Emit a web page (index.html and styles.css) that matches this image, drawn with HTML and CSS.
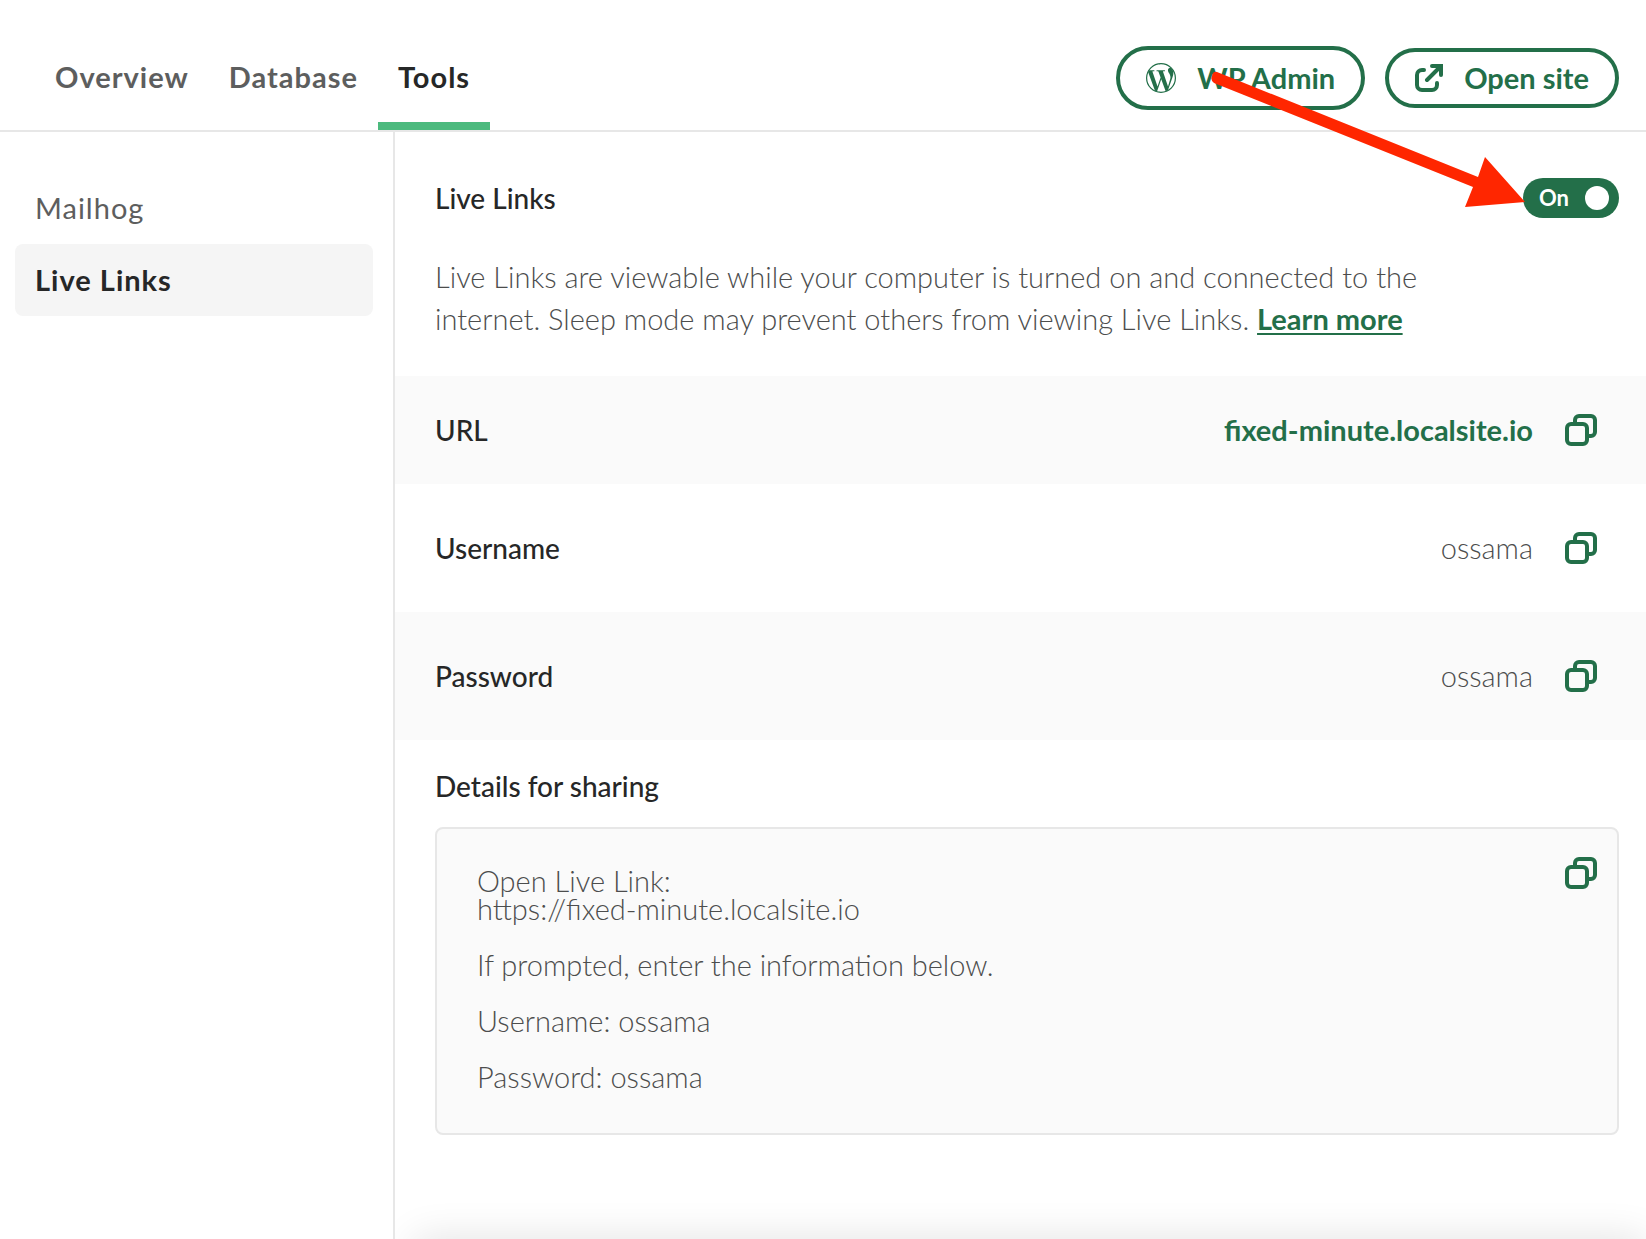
FILE: index.html
```html
<!DOCTYPE html>
<html lang="en">
<head>
<meta charset="utf-8">
<meta name="viewport" content="width=device-width, initial-scale=1">
<title>Live Links</title>
<link rel="stylesheet" href="styles.css">
</head>
<body>
<svg class="sprite" aria-hidden="true">
  <symbol id="copy" viewBox="0 0 32 32">
    <path fill="none" stroke="currentColor" stroke-width="4" d="M10 9V6a4 4 0 0 1 4-4h12a4 4 0 0 1 4 4v12a4 4 0 0 1-4 4h-3"/>
    <rect fill="none" stroke="currentColor" stroke-width="4" x="2" y="10" width="20" height="20" rx="4"/>
  </symbol>
</svg>
<header class="topbar">
  <nav class="tabs" aria-label="Site">
    <a class="tab" href="#overview">Overview</a>
    <a class="tab" href="#database">Database</a>
    <a class="tab tab-active" href="#tools" aria-current="page">Tools</a>
  </nav>
  <div class="actions">
    <button class="button button-large" type="button">
      <svg class="icon-wp" viewBox="8 8 496 496" aria-hidden="true"><circle cx="256" cy="256" r="238" fill="none" stroke="currentColor" stroke-width="20"/><path transform="translate(256 256) scale(1.09) translate(-256 -256)" fill="currentColor" fill-rule="evenodd" d="M43.3 256a212.7 212.7 0 1 0 425.4 0a212.7 212.7 0 1 0-425.4 0zM61.7 169.4l101.5 278C92.2 413 43.3 340.2 43.3 256c0-30.9 6.6-60.1 18.4-86.6zm337.9 75.9c0-26.3-9.4-44.5-17.5-58.7-10.8-17.5-20.9-32.4-20.9-49.9 0-19.6 14.8-37.8 35.7-37.8.9 0 1.8.1 2.8.2-37.9-34.7-88.3-55.9-143.7-55.9-74.3 0-139.7 38.1-177.8 95.9 5 .2 9.7.3 13.7.3 22.2 0 56.7-2.7 56.7-2.7 11.5-.7 12.8 16.2 1.4 17.5 0 0-11.5 1.3-24.3 2l77.5 230.4L249.8 247l-33.1-90.8c-11.5-.7-22.3-2-22.3-2-11.5-.7-10.1-18.2 1.3-17.5 0 0 35.1 2.7 56 2.7 22.2 0 56.7-2.7 56.7-2.7 11.5-.7 12.8 16.2 1.4 17.5 0 0-11.5 1.3-24.3 2l76.9 228.7 21.2-70.9c9-29.4 16-50.5 16-68.7zm-139.9 29.3l-63.8 185.5c19.1 5.6 39.2 8.7 60.1 8.7 24.8 0 48.5-4.3 70.6-12.1-.6-.9-1.1-1.9-1.5-2.9l-65.4-179.2zm183-120.7c.9 6.8 1.4 14 1.4 21.9 0 21.6-4 45.8-16.2 76.2l-65 187.9C426.2 403 468.7 334.5 468.7 256c0-37-9.4-71.8-26-102.1z"/></svg>
      WP Admin
    </button>
    <button class="button" type="button">
      <svg class="icon-open" viewBox="0 0 28 28" aria-hidden="true"><g fill="none" stroke="currentColor" stroke-width="4" stroke-linecap="round"><path d="M9 6H7a5 5 0 0 0-5 5v10a5 5 0 0 0 5 5h10a5 5 0 0 0 5-5v-2"/><path d="M17 2h9v9M26 2 12 16"/></g></svg>
      Open site
    </button>
  </div>
</header>
<div class="layout">
  <nav class="sidebar" aria-label="Tools">
    <a class="side-link" href="#mailhog">Mailhog</a>
    <a class="side-link side-link-active" href="#live-links" aria-current="page">Live Links</a>
  </nav>
  <main class="content">
    <section class="intro">
      <div class="intro-head">
        <h1 class="title">Live Links</h1>
        <label class="toggle">On<input class="toggle-knob" type="checkbox" role="switch" checked></label>
      </div>
      <p class="description">Live Links are viewable while your computer is turned on and connected to the internet. Sleep mode may prevent others from viewing Live Links. <a class="learn-more" href="#learn-more">Learn more</a></p>
    </section>
    <dl class="rows">
      <div class="row row-short">
        <dt class="title">URL</dt>
        <dd class="value"><a class="site-link" href="#site">fixed-minute.localsite.io</a>
          <button class="copy" type="button" aria-label="Copy URL"><svg class="icon-copy"><use href="#copy"/></svg></button></dd>
      </div>
      <div class="row">
        <dt class="title">Username</dt>
        <dd class="value">ossama
          <button class="copy" type="button" aria-label="Copy username"><svg class="icon-copy"><use href="#copy"/></svg></button></dd>
      </div>
      <div class="row">
        <dt class="title">Password</dt>
        <dd class="value">ossama
          <button class="copy" type="button" aria-label="Copy password"><svg class="icon-copy"><use href="#copy"/></svg></button></dd>
      </div>
    </dl>
    <section class="sharing">
      <h2 class="title">Details for sharing</h2>
      <div class="details">
        <div class="message">
          <p>Open Live Link:<br>https://fixed-minute.localsite.io</p>
          <p>If prompted, enter the information below.</p>
          <p>Username: ossama</p>
          <p>Password: ossama</p>
        </div>
        <button class="copy" type="button" aria-label="Copy details"><svg class="icon-copy"><use href="#copy"/></svg></button>
      </div>
    </section>
  </main>
</div>
<svg class="pointer" viewBox="0 0 320 140" aria-hidden="true"><path fill="#ff2600" d="M15 2 276 107 283 87 323 132 263 137 271 117 12 13Q8 10 10 6 11 1 15 2Z"/></svg>
</body>
</html>
```
FILE: styles.css
```css
:root {
  --green: #236f49;
  --ink: #262727;
  --muted: #5d5e5e;
  --body: #4c4d4d;
  --line: #e7e7e7;
  --shade: #fafafa;
}

* {
  box-sizing: border-box;
}

body {
  position: relative;
  display: flex;
  flex-direction: column;
  min-height: 100vh;
  margin: 0;
  background: #fff;
  color: var(--muted);
  font: 300 29px/28px Lato, "Open Sans", sans-serif;
}

h1, h2, p, dl, dd {
  margin: 0;
}

a {
  color: inherit;
  text-decoration: none;
}

button {
  font: inherit;
  cursor: pointer;
}

svg {
  display: block;
  flex: none;
}

.sprite {
  position: absolute;
  width: 0;
  height: 0;
}

.topbar {
  display: flex;
  justify-content: space-between;
  height: 132px;
  padding: 0 27px 0 35px;
  border-bottom: 2px solid var(--line);
}

.tabs {
  display: flex;
}

.tab {
  padding: 63px 20px 31px;
  border-bottom: 8px solid transparent;
  font-weight: 700;
  letter-spacing: 1px;
}

.tab-active {
  border-color: #4cba7e;
  color: var(--ink);
}

.actions {
  display: flex;
  align-items: center;
  gap: 20px;
  padding-top: 26px;
}

.button {
  display: flex;
  align-items: center;
  gap: 21px;
  height: 60px;
  padding: 0 26px;
  border: 4px solid var(--green);
  border-radius: 32px;
  background: none;
  color: var(--green);
  font-weight: 700;
}

.button-large {
  height: 64px;
}

.icon-wp {
  width: 30px;
  height: 30px;
}

.icon-open {
  width: 28px;
  height: 28px;
}

.layout {
  display: flex;
  flex: 1;
}

.sidebar {
  flex: none;
  width: 395px;
  padding: 40px 20px 40px 15px;
  border-right: 2px solid var(--line);
}

.side-link {
  display: block;
  padding: 22px 20px;
  border-radius: 8px;
  font-weight: 400;
  letter-spacing: 1px;
}

.side-link-active {
  background: #f5f5f5;
  color: var(--ink);
  font-weight: 700;
}

.content {
  position: relative;
  flex: 1;
  overflow: hidden;
}

.content::after {
  content: "";
  position: absolute;
  top: 100%;
  left: 20px;
  right: 0;
  height: 40px;
  box-shadow: 0 0 40px rgba(0, 0, 0, 0.12);
}

.intro {
  padding: 46px 27px 36px 40px;
}

.intro-head {
  display: flex;
  align-items: center;
  justify-content: space-between;
  margin-bottom: 38px;
}

.title {
  color: var(--ink);
  font-size: 28px;
  font-weight: 500;
}

.toggle {
  display: flex;
  align-items: center;
  justify-content: space-between;
  width: 96px;
  height: 40px;
  padding: 0 10px 0 16px;
  border-radius: 20px;
  background: var(--green);
  color: #fff;
  font-size: 22px;
  font-weight: 700;
  cursor: pointer;
}

.toggle-knob {
  appearance: none;
  width: 24px;
  height: 24px;
  margin: 0;
  border-radius: 50%;
  background: #fff;
}

.description {
  max-width: 1000px;
  color: var(--body);
  line-height: 42px;
}

.learn-more {
  color: var(--green);
  font-weight: 700;
  text-decoration: underline;
  text-decoration-thickness: 2px;
  text-underline-offset: 3px;
}

.row {
  display: flex;
  align-items: center;
  justify-content: space-between;
  min-height: 128px;
  padding: 0 49px 0 40px;
}

.row-short {
  min-height: 108px;
}

.row:nth-child(odd) {
  background: var(--shade);
}

.value {
  display: flex;
  align-items: center;
  gap: 32px;
  color: var(--body);
}

.site-link {
  color: var(--green);
  font-weight: 700;
}

.copy {
  flex: none;
  padding: 0;
  border: 0;
  background: none;
  color: var(--green);
}

.icon-copy {
  width: 32px;
  height: 32px;
}

.sharing {
  display: grid;
  gap: 27px;
  padding: 32px 27px 100px 40px;
}

.details {
  display: flex;
  align-items: flex-start;
  justify-content: space-between;
  padding: 28px 20px 42px 40px;
  border: 2px solid var(--line);
  border-radius: 8px;
  background: var(--shade);
}

.message {
  display: grid;
  gap: 28px;
  padding-top: 10px;
  color: var(--body);
}

/* Callout arrow laid over the page, pointing at the switch */
.pointer {
  position: absolute;
  top: 70px;
  right: 124px;
  width: 320px;
  height: 140px;
  overflow: visible;
  pointer-events: none;
}
```
